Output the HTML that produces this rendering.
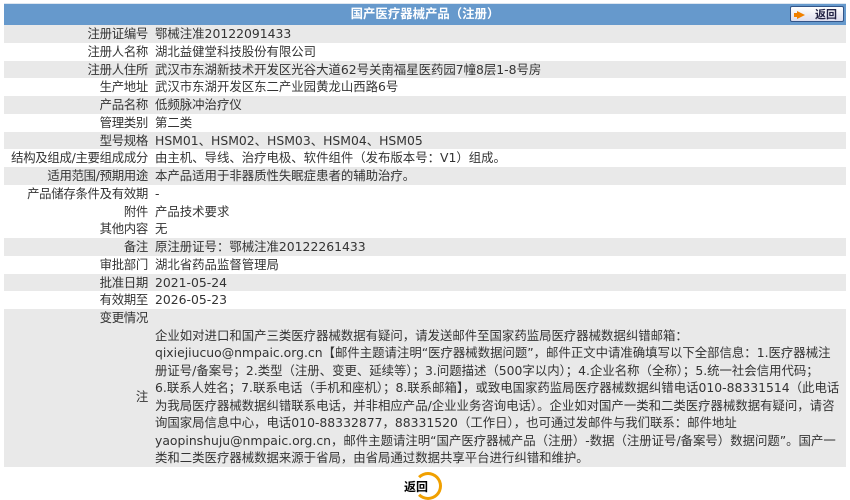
<!DOCTYPE html>
<html><head><meta charset="utf-8"><style>
body{margin:0;background:#fff;font-family:"DejaVu Sans","Noto Sans CJK SC",sans-serif;font-size:12.4px;color:#333;}
.wrap{position:absolute;left:4px;top:3px;width:842px;}
.hd{height:21px;background:#6699cc;color:#fff;font-weight:bold;text-align:center;line-height:21px;position:relative;border-top:1px solid #dde6f0;font-family:"Liberation Sans","Noto Sans CJK SC",sans-serif;font-size:12.4px;}
.btn{position:absolute;right:2px;top:2px;width:54px;height:16px;background:linear-gradient(#fff,#dde);border:1px solid #335588;border-radius:2px;line-height:16px;color:#224;font-size:11px;text-align:right;padding-right:6px;box-sizing:border-box;}
.btn i{position:absolute;left:6px;top:4px;width:0;height:0;border-left:8px solid #f08000;border-top:4px solid transparent;border-bottom:4px solid transparent;}
.btn b{position:absolute;left:3px;top:6px;width:5px;height:4px;background:#f08000;}
.r{display:flex;height:17.75px;line-height:17.75px;}
.g{background:#e9e9e9;}
.l{width:144px;text-align:right;padding-right:7px;white-space:nowrap;letter-spacing:-0.3px;}
.v{flex:1;white-space:nowrap;}
.note{display:flex;background:#e9e9e9;height:140px;}
.note .l{line-height:140px;}
.note .v{line-height:17.5px;}
.back{position:absolute;left:404px;top:478px;font-weight:bold;color:#000;font-size:12px;}
.circ{position:absolute;left:414px;top:472px;width:28px;height:28px;border-radius:50%;border:3px solid #f0a000;border-left-color:transparent;box-sizing:border-box;}
</style></head><body>
<div class="wrap">
<div class="hd">国产医疗器械产品（注册）<div class="btn"><b></b><i></i>返回</div></div>
<div class="r g"><div class="l">注册证编号</div><div class="v">鄂械注准20122091433</div></div>
<div class="r"><div class="l">注册人名称</div><div class="v">湖北益健堂科技股份有限公司</div></div>
<div class="r g"><div class="l">注册人住所</div><div class="v">武汉市东湖新技术开发区光谷大道62号关南福星医药园7幢8层1-8号房</div></div>
<div class="r"><div class="l">生产地址</div><div class="v">武汉市东湖开发区东二产业园黄龙山西路6号</div></div>
<div class="r g"><div class="l">产品名称</div><div class="v">低频脉冲治疗仪</div></div>
<div class="r"><div class="l">管理类别</div><div class="v">第二类</div></div>
<div class="r g"><div class="l">型号规格</div><div class="v">HSM01、HSM02、HSM03、HSM04、HSM05</div></div>
<div class="r"><div class="l">结构及组成/主要组成成分</div><div class="v">由主机、导线、治疗电极、软件组件（发布版本号：V1）组成。</div></div>
<div class="r g"><div class="l">适用范围/预期用途</div><div class="v">本产品适用于非器质性失眠症患者的辅助治疗。</div></div>
<div class="r"><div class="l">产品储存条件及有效期</div><div class="v">-</div></div>
<div class="r"><div class="l">附件</div><div class="v">产品技术要求</div></div>
<div class="r"><div class="l">其他内容</div><div class="v">无</div></div>
<div class="r g"><div class="l">备注</div><div class="v">原注册证号：鄂械注准20122261433</div></div>
<div class="r"><div class="l">审批部门</div><div class="v">湖北省药品监督管理局</div></div>
<div class="r g"><div class="l">批准日期</div><div class="v">2021-05-24</div></div>
<div class="r"><div class="l">有效期至</div><div class="v">2026-05-23</div></div>
<div class="r g"><div class="l">变更情况</div><div class="v"></div></div>
<div class="note"><div class="l">注</div><div class="v">企业如对进口和国产三类医疗器械数据有疑问，请发送邮件至国家药监局医疗器械数据纠错邮箱：<br>qixiejiucuo@nmpaic.org.cn【邮件主题请注明“医疗器械数据问题”，邮件正文中请准确填写以下全部信息：1.医疗器械注<br>册证号/备案号；2.类型（注册、变更、延续等）；3.问题描述（500字以内）；4.企业名称（全称）；5.统一社会信用代码；<br>6.联系人姓名；7.联系电话（手机和座机）；8.联系邮箱】，或致电国家药监局医疗器械数据纠错电话010-88331514（此电话<br>为我局医疗器械数据纠错联系电话，并非相应产品/企业业务咨询电话）。企业如对国产一类和二类医疗器械数据有疑问，请咨<br>询国家局信息中心，电话010-88332877，88331520（工作日），也可通过发邮件与我们联系：邮件地址<br>yaopinshuju@nmpaic.org.cn，邮件主题请注明“国产医疗器械产品（注册）-数据（注册证号/备案号）数据问题”。国产一<br>类和二类医疗器械数据来源于省局，由省局通过数据共享平台进行纠错和维护。</div></div>
</div>
<div class="circ"></div>
<div class="back">返回</div>
</body></html>
